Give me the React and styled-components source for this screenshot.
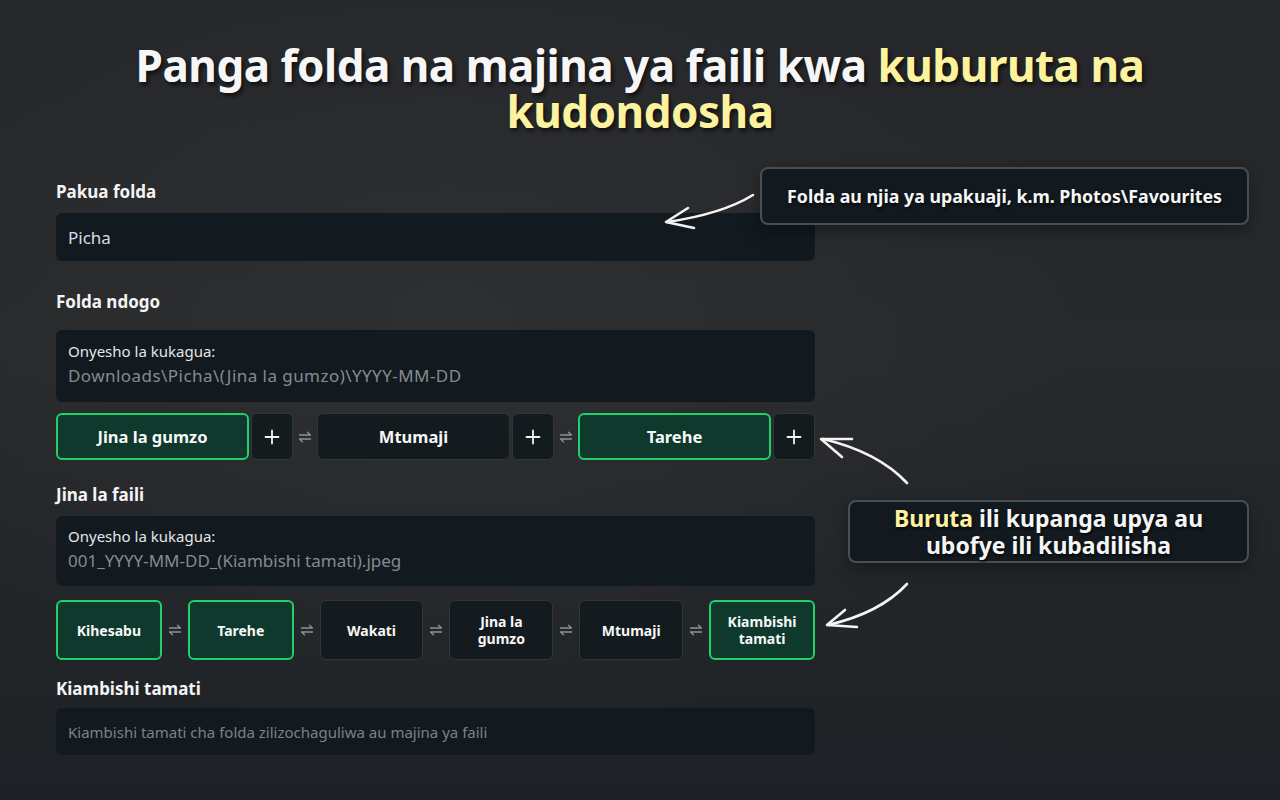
import React from 'react'
import styled, { createGlobalStyle } from 'styled-components'

const GlobalStyle = createGlobalStyle`
	* {
		box-sizing: border-box;
	}
	html, body {
		margin: 0;
		padding: 0;
		background: #222427;
	}
	body {
		font-family: 'Noto Sans', 'Open Sans', sans-serif;
		color: #f3f4f5;
	}
`

const Page = styled.div`
	position: relative;
	width: 1280px;
	height: 800px;
	overflow: hidden;
	background:
		radial-gradient(ellipse 900px 600px at 35% 40%, rgba(52, 52, 54, 0.55), rgba(0, 0, 0, 0) 70%),
		linear-gradient(180deg, #25272a 0%, #27292b 45%, #1e2226 100%);
`

const Title = styled.h1`
	margin: 0;
	padding-top: 42px;
	text-align: center;
	font-size: 44px;
	line-height: 46px;
	font-weight: 700;
	letter-spacing: -0.5px;
	color: #f6f6f6;
	text-shadow: 2px 3px 4px rgba(0, 0, 0, 0.65);
`

const Accent = styled.span`
	color: #fdf29e;
`

const Form = styled.div`
	width: 759px;
	margin: 46px 0 0 56px;
	display: flex;
	flex-direction: column;
`

const Label = styled.div`
	font-size: 17px;
	line-height: 24px;
	font-weight: 700;
	color: #f4f4f4;
	margin-top: ${p => p.$top || 0}px;
	margin-bottom: ${p => p.$bottom || 9}px;
`

const Input = styled.div`
	height: ${p => p.$h || 48}px;
	background: #121a1f;
	border-radius: 6px;
	padding: 0 12px;
	display: flex;
	align-items: center;
	font-size: ${p => (p.$placeholder ? 15 : 17)}px;
	color: ${p => (p.$placeholder ? '#7b8286' : '#d9dde0')};
`

const Preview = styled.div`
	height: ${p => p.$h}px;
	background: #121a1f;
	border-radius: 6px;
	padding: ${p => p.$pt}px 12px 0;
	display: flex;
	flex-direction: column;
`

const PreviewLabel = styled.div`
	font-size: 15px;
	line-height: 20px;
	color: #e4e6e8;
`

const PreviewPath = styled.div`
	font-size: 17px;
	line-height: 30px;
	letter-spacing: ${p => p.$ls || 0}px;
	color: #858b90;
`

const ChipRow = styled.div`
	display: flex;
	align-items: stretch;
	height: ${p => p.$h}px;
	margin-top: ${p => p.$top}px;
`

const Chip = styled.div`
	flex: ${p => (p.$w ? `0 0 ${p.$w}px` : '1 1 0')};
	display: flex;
	align-items: center;
	justify-content: center;
	text-align: center;
	border-radius: 6px;
	font-weight: 700;
	font-size: ${p => p.$fs || 16.5}px;
	line-height: 17px;
	color: #f7f7f7;
	padding: 0 8px;
	background: ${p => (p.$on ? '#0e392c' : '#131b1f')};
	border: ${p => (p.$on ? '2px solid #1fd16c' : '1px solid #2d363a')};
`

const PlusBox = styled.div`
	flex: 0 0 42px;
	margin-left: 2px;
	display: flex;
	align-items: center;
	justify-content: center;
	border-radius: 6px;
	background: #131b1f;
	border: 1px solid #2d363a;
`

const Swap = styled.div`
	flex: 0 0 ${p => p.$w}px;
	display: flex;
	align-items: center;
	justify-content: center;
`

const Callout = styled.div`
	position: absolute;
	left: ${p => p.$x}px;
	top: ${p => p.$y}px;
	width: ${p => p.$w}px;
	height: ${p => p.$h}px;
	display: flex;
	align-items: center;
	justify-content: center;
	text-align: center;
	background: #131a1f;
	border: 2px solid #455054;
	border-radius: 8px;
	box-shadow: 0 6px 18px rgba(0, 0, 0, 0.35);
	font-weight: 700;
	font-size: ${p => p.$fs}px;
	line-height: ${p => p.$lh}px;
	color: #f6f6f6;
	text-shadow: 1px 2px 3px rgba(0, 0, 0, 0.7);
`

const Arrows = styled.svg`
	position: absolute;
	left: 0;
	top: 0;
	pointer-events: none;
`

const PlusIcon = () => (
	<svg width='16' height='16' viewBox='0 0 16 16'>
		<path d='M8 1.5V14.5M1.5 8H14.5' stroke='#f2f2f2' strokeWidth='1.8' strokeLinecap='round' />
	</svg>
)

const SwapIcon = () => (
	<svg width='14' height='14' viewBox='0 0 14 14' fill='none'>
		<path d='M1.5 5H12.5L9.5 2.2M12.5 9H1.5L4.5 11.8' stroke='#8d9396' strokeWidth='1.3' strokeLinecap='round' strokeLinejoin='round' />
	</svg>
)

const Plus = () => (
	<PlusBox>
		<PlusIcon />
	</PlusBox>
)

const folderParts = [
	{ name: 'Jina la gumzo', on: true },
	{ name: 'Mtumaji', on: false },
	{ name: 'Tarehe', on: true },
]

const fileParts = [
	{ name: 'Kihesabu', on: true },
	{ name: 'Tarehe', on: true },
	{ name: 'Wakati', on: false },
	{ name: 'Jina la gumzo', on: false },
	{ name: 'Mtumaji', on: false },
	{ name: 'Kiambishi tamati', on: true },
]

export default function App() {
	return (
		<Page>
			<GlobalStyle />
			<Title>
				Panga folda na majina ya faili kwa <Accent>kuburuta na</Accent>
				<br />
				<Accent>kudondosha</Accent>
			</Title>

			<Form>
				<Label>Pakua folda</Label>
				<Input>Picha</Input>

				<Label $top={29} $bottom={16}>Folda ndogo</Label>
				<Preview $h={72} $pt={11}>
					<PreviewLabel>Onyesho la kukagua:</PreviewLabel>
					<PreviewPath $ls={0.45}>Downloads\Picha\(Jina la gumzo)\YYYY-MM-DD</PreviewPath>
				</Preview>
				<ChipRow $h={47} $top={11}>
					{folderParts.map((p, i) => (
						<React.Fragment key={p.name}>
							{i > 0 && (
								<Swap $w={24}>
									<SwapIcon />
								</Swap>
							)}
							<Chip $on={p.on} $w={193}>{p.name}</Chip>
							<Plus />
						</React.Fragment>
					))}
				</ChipRow>

				<Label $top={23}>Jina la faili</Label>
				<Preview $h={70} $pt={10}>
					<PreviewLabel>Onyesho la kukagua:</PreviewLabel>
					<PreviewPath>001_YYYY-MM-DD_(Kiambishi tamati).jpeg</PreviewPath>
				</Preview>
				<ChipRow $h={60} $top={14}>
					{fileParts.map((p, i) => (
						<React.Fragment key={p.name}>
							{i > 0 && (
								<Swap $w={26}>
									<SwapIcon />
								</Swap>
							)}
							<Chip $on={p.on} $fs={14}>{p.name}</Chip>
						</React.Fragment>
					))}
				</ChipRow>

				<Label $top={17} $bottom={7}>Kiambishi tamati</Label>
				<Input $h={47} $placeholder>
					Kiambishi tamati cha folda zilizochaguliwa au majina ya faili
				</Input>
			</Form>

			<Callout $x={760} $y={167} $w={489} $h={58} $fs={17.8} $lh={22}>
				Folda au njia ya upakuaji, k.m. Photos\Favourites
			</Callout>
			<Callout $x={848} $y={500} $w={401} $h={63} $fs={23} $lh={27}>
				<span>
					<Accent>Buruta</Accent> ili kupanga upya au
					<br />
					ubofye ili kubadilisha
				</span>
			</Callout>

			<Arrows width='1280' height='800' viewBox='0 0 1280 800' fill='none'>
				<g stroke='#f4f4f4' strokeWidth='2.6' strokeLinecap='round' strokeLinejoin='round'>
					<path d='M753 195 Q 722 214 667 222' />
					<path d='M688 208 L666 222 L694 228' />
					<path d='M907 483 Q 878 452 823 439' />
					<path d='M852 439 L821 439 L842 457' />
					<path d='M907 584 Q 880 613 828 625' />
					<path d='M845 610 L827 625 L857 627' />
				</g>
			</Arrows>
		</Page>
	)
}
